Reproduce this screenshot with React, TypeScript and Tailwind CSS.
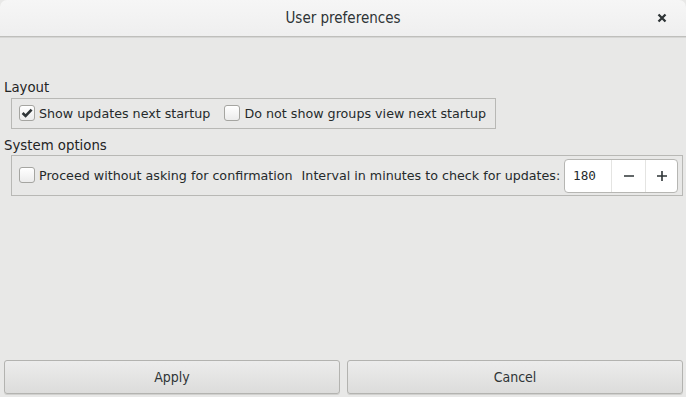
import React from "react";

const body = { fontFamily: "'DejaVu Sans', 'Liberation Sans', sans-serif" };
const cond = { fontFamily: "'DejaVu Sans Condensed', 'DejaVu Sans', sans-serif", fontStretch: "condensed" as const };

function Check({ checked }: { checked?: boolean }) {
  return (
    <span className="flex h-[16px] w-[16px] shrink-0 items-center justify-center rounded-[3px] border border-[#a5a5a1] bg-gradient-to-b from-[#ffffff] to-[#ececec] shadow-[inset_0_1px_0_#fff]">
      {checked && (
        <svg width="12" height="12" viewBox="0 0 12 12">
          <path d="M1.6 6 L4.6 9 L10.6 2.6" fill="none" stroke="#2e3436" strokeWidth="2.6" />
        </svg>
      )}
    </span>
  );
}

function CheckRow({ label, checked }: { label: string; checked?: boolean }) {
  return (
    <label className="flex shrink-0 items-center gap-[4px] whitespace-nowrap">
      <Check checked={checked} />
      <span>{label}</span>
    </label>
  );
}

export default function App() {
  return (
    <div className="flex h-[397px] w-[686px] flex-col overflow-hidden bg-[#e8e8e7] text-[12.7px] text-[#252a2b]" style={body}>
      <header className="relative flex h-[37px] shrink-0 items-center justify-center rounded-t-[7px] border-b border-[#bfbfbc] bg-gradient-to-b from-[#f6f6f6] to-[#efefef] shadow-[0_1px_0_#d6d6d4]">
        <span className="text-[15px] font-medium text-[#2e3436]" style={cond}>User preferences</span>
        <span className="absolute right-[18px] top-[12px] flex h-[12px] w-[12px] items-center justify-center">
          <svg width="10" height="10" viewBox="0 0 10 10">
            <path d="M1.5 1.5 L8.5 8.5 M8.5 1.5 L1.5 8.5" stroke="#2e3436" strokeWidth="2.3" />
          </svg>
        </span>
      </header>

      <main className="flex flex-1 flex-col pl-[4px] pr-[3px] pt-[42px]">
        <div className="text-[13.3px] leading-[17px] text-[#1f2425]">Layout</div>
        <div className="ml-[7px] mt-[2px] flex h-[31px] w-[485px] items-center gap-[14px] border border-[#b8b8b5] pl-[7px]">
          <CheckRow label="Show updates next startup" checked />
          <CheckRow label="Do not show groups view next startup" />
        </div>

        <div className="mt-[8px] text-[13.3px] leading-[17px] text-[#1f2425]">System options</div>
        <div className="ml-[7px] mt-[1px] flex h-[41px] w-[672px] items-center whitespace-nowrap border border-[#b8b8b5] pl-[7px] pr-[4px]">
          <CheckRow label="Proceed without asking for confirmation" />
          <span className="ml-[9px]">Interval in minutes to check for updates:</span>
          <div className="ml-auto flex h-[34px] w-[114px] shrink-0 overflow-hidden rounded-[4px] border border-[#b6b6b3] bg-white">
            <div className="flex w-[46px] items-center pl-[8px]" style={{ fontFamily: "'DejaVu Sans Mono', monospace" }}>180</div>
            <div className="flex w-[34px] items-center justify-center border-l border-[#e4e4e2]">
              <svg width="12" height="12" viewBox="0 0 12 12"><path d="M1 6 H11" stroke="#2e3436" strokeWidth="1.6" /></svg>
            </div>
            <div className="flex flex-1 items-center justify-center border-l border-[#e4e4e2]">
              <svg width="12" height="12" viewBox="0 0 12 12"><path d="M1 6 H11 M6 1 V11" stroke="#2e3436" strokeWidth="1.6" /></svg>
            </div>
          </div>
        </div>

        <div className="mt-auto mb-[3px] flex gap-[7px]">
          <button className="h-[34px] w-[336px] rounded-[3px] border border-[#b3b3b0] bg-gradient-to-b from-[#ececec] to-[#dcdcdb] text-[14px] text-[#2e3436] shadow-[0_1px_0_#d0d0ce]" style={cond}>Apply</button>
          <button className="h-[34px] flex-1 rounded-[3px] border border-[#b3b3b0] bg-gradient-to-b from-[#ececec] to-[#dcdcdb] text-[14px] text-[#2e3436] shadow-[0_1px_0_#d0d0ce]" style={cond}>Cancel</button>
        </div>
      </main>
    </div>
  );
}
